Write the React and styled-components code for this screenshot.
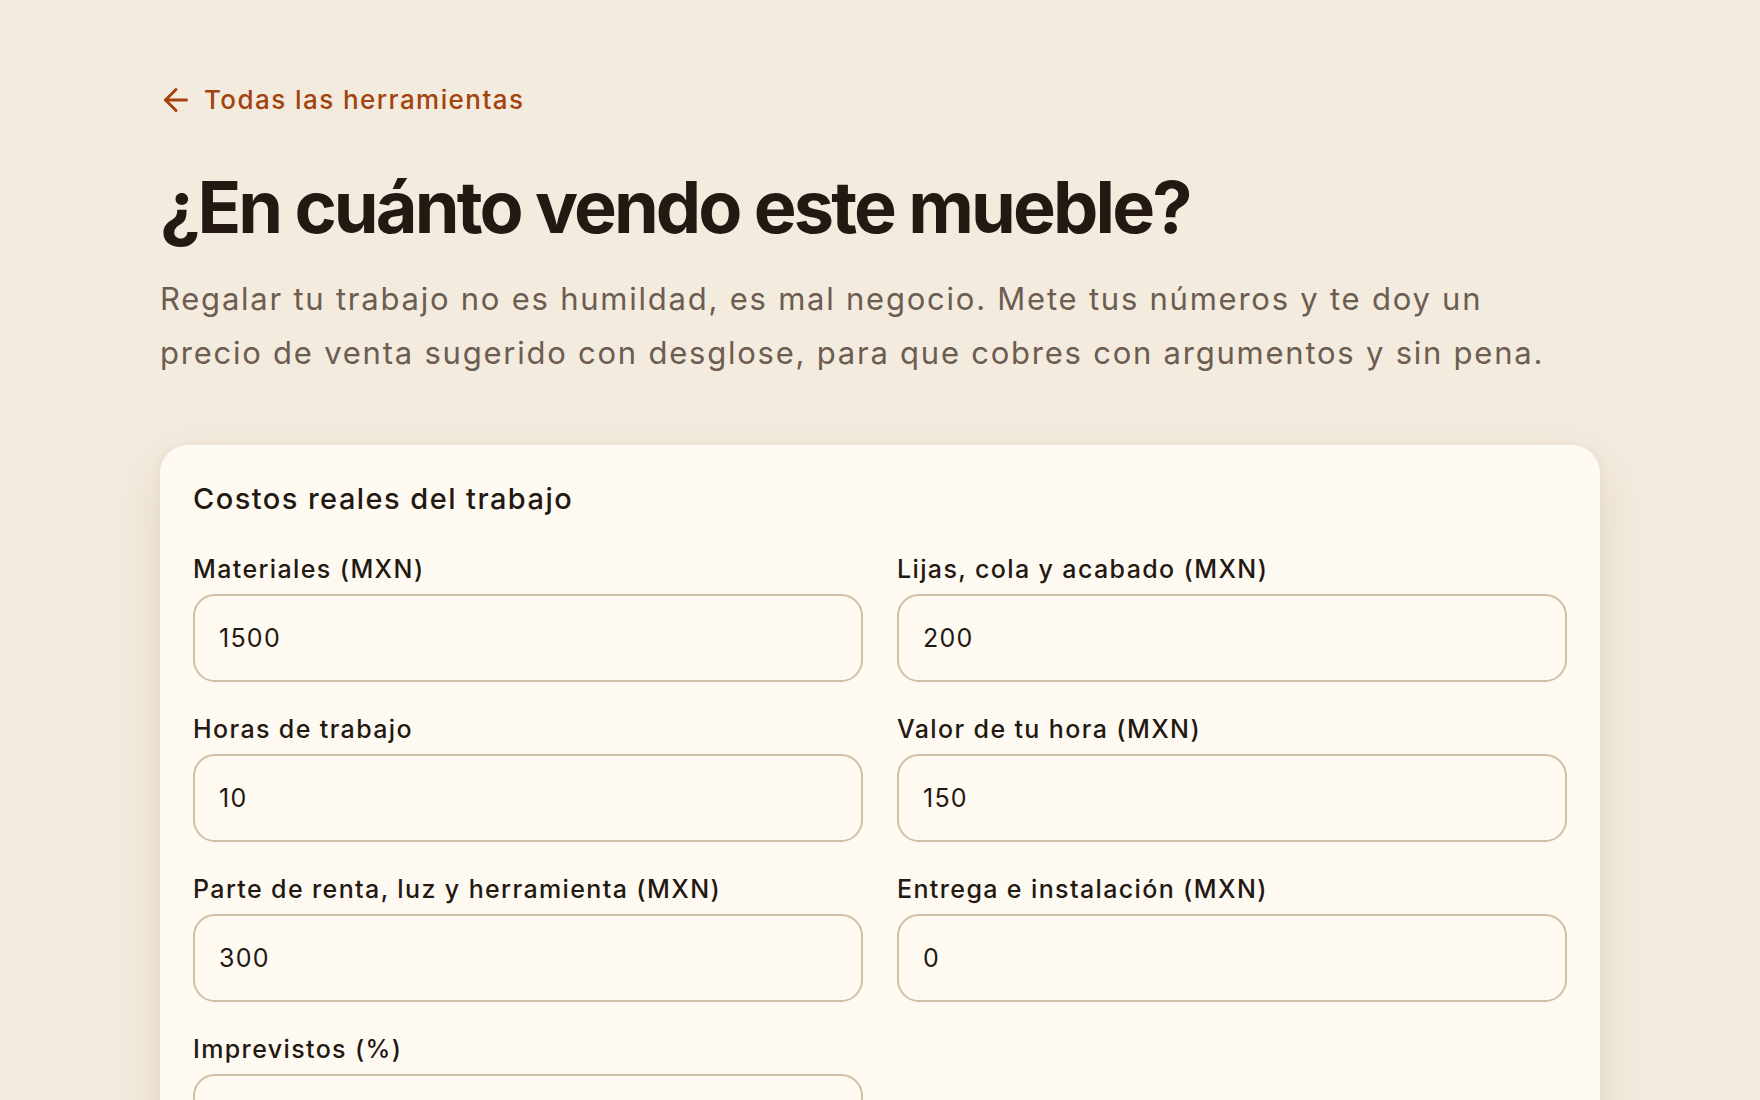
import React from 'react'
import styled, { createGlobalStyle } from 'styled-components'
import { ArrowLeft } from 'lucide-react'

const GlobalStyle = createGlobalStyle`
  html, body {
    margin: 0;
    padding: 0;
    background: #f3ebde;
  }
  body {
    font-family: Inter, "Open Sans", "Noto Sans", sans-serif;
    color: #231812;
    -webkit-font-smoothing: antialiased;
  }
  * {
    box-sizing: border-box;
  }
`

const Page = styled.main`
  min-height: 100vh;
  padding: 84px 160px 80px;
`

const BackLink = styled.a`
  display: inline-flex;
  align-items: center;
  gap: 10px;
  margin-left: -2px;
  color: #a3430f;
  font-size: 26px;
  font-weight: 450;
  text-decoration: none;
  letter-spacing: 0.055em;
  cursor: pointer;
  svg {
    width: 36px;
    height: 36px;
    margin: -5px 0;
  }
`

const Title = styled.h1`
  margin: 45px 0 0;
  font-size: 72px;
  line-height: 1.1;
  font-weight: 700;
  letter-spacing: -0.04em;
  color: #231812;
`

const Lead = styled.p`
  margin: 26px 0 0;
  max-width: 1405px;
  font-size: 31px;
  line-height: 54px;
  font-weight: 400;
  color: #6d5c50;
  letter-spacing: 0.057em;
`

const Card = styled.section`
  margin-top: 65px;
  background: #fffaf1;
  border-radius: 28px;
  padding: 35px 33px 40px;
  box-shadow: 0 18px 50px rgba(110, 80, 40, 0.13), 0 2px 8px rgba(110, 80, 40, 0.05);
`

const CardTitle = styled.h2`
  margin: 0 0 34px;
  font-size: 29px;
  line-height: 38px;
  font-weight: 500;
  letter-spacing: 0.05em;
  color: #231812;
`

const FieldGrid = styled.div`
  display: grid;
  grid-template-columns: 1fr 1fr;
  column-gap: 34px;
  row-gap: 30px;
`

const Field = styled.label`
  display: flex;
  flex-direction: column;
  gap: 8px;
`

const FieldLabel = styled.span`
  font-size: 25px;
  line-height: 34px;
  font-weight: 500;
  color: #231812;
  letter-spacing: 0.055em;
`

const Input = styled.input`
  height: 88px;
  width: 100%;
  padding: 0 24px;
  border: 2px solid #d0c1a6;
  border-radius: 22px;
  background: #fffaf1;
  font-family: inherit;
  font-size: 25px;
  letter-spacing: 0.05em;
  color: #231812;
  outline: none;
  &:focus {
    border-color: #a3430f;
  }
`

const fields = [
  { label: 'Materiales (MXN)', value: '1500' },
  { label: 'Lijas, cola y acabado (MXN)', value: '200' },
  { label: 'Horas de trabajo', value: '10' },
  { label: 'Valor de tu hora (MXN)', value: '150' },
  { label: 'Parte de renta, luz y herramienta (MXN)', value: '300' },
  { label: 'Entrega e instalación (MXN)', value: '0' },
  { label: 'Imprevistos (%)', value: '10' }
]

export default function App() {
  return (
    <>
      <GlobalStyle />
      <Page>
        <BackLink href="#">
          <ArrowLeft strokeWidth={2} />
          Todas las herramientas
        </BackLink>
        <Title>¿En cuánto vendo este mueble?</Title>
        <Lead>
          Regalar tu trabajo no es humildad, es mal negocio. Mete tus números y te doy un
          precio de venta sugerido con desglose, para que cobres con argumentos y sin pena.
        </Lead>
        <Card>
          <CardTitle>Costos reales del trabajo</CardTitle>
          <FieldGrid>
            {fields.map(({ label, value }) => (
              <Field key={label}>
                <FieldLabel>{label}</FieldLabel>
                <Input type="text" inputMode="decimal" defaultValue={value} />
              </Field>
            ))}
          </FieldGrid>
        </Card>
      </Page>
    </>
  )
}
